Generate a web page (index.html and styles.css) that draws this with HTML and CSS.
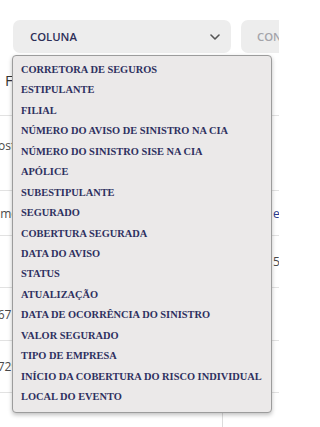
FILE: index.html
```html
<!DOCTYPE html>
<html lang="pt-BR">
<head>
<meta charset="utf-8">
<title>Filtros</title>
<link rel="stylesheet" href="styles.css">
</head>
<body>
<div class="page">
  <div class="filters">
    <div class="select sel-main">
      <span class="sel-label">COLUNA</span>
      <svg class="chev" width="10" height="6" viewBox="0 0 10 6"><path d="M1 1 L5 5 L9 1" fill="none" stroke="#555" stroke-width="1.6" stroke-linecap="round" stroke-linejoin="round"/></svg>
    </div>
    <div class="select sel-second">
      <span class="sel-label muted">CONDIÇÃO</span>
    </div>
  </div>
  <div class="head">
    <div class="title">Filtros</div>
  </div>
  <div class="table">
    <div class="row r1"><div class="cell"><span class="txt">Agosto</span></div><div class="cell"></div></div>
    <div class="row r2"><div class="cell"><span class="txt">Nome</span></div><div class="cell"><span class="rtxt link">e</span></div></div>
    <div class="row r3"><div class="cell"></div><div class="cell"><span class="rtxt">5(</span></div></div>
    <div class="row r4"><div class="cell"><span class="txt">12671</span></div><div class="cell"></div></div>
    <div class="row r5"><div class="cell"><span class="txt">30729</span></div><div class="cell"></div></div>
    <div class="row r6"><div class="cell divider"></div><div class="cell"></div></div>
  </div>
  <ul class="dropdown">
    <li>CORRETORA DE SEGUROS</li>
    <li>ESTIPULANTE</li>
    <li>FILIAL</li>
    <li>NÚMERO DO AVISO DE SINISTRO NA CIA</li>
    <li>NÚMERO DO SINISTRO SISE NA CIA</li>
    <li>APÓLICE</li>
    <li>SUBESTIPULANTE</li>
    <li>SEGURADO</li>
    <li>COBERTURA SEGURADA</li>
    <li>DATA DO AVISO</li>
    <li>STATUS</li>
    <li>ATUALIZAÇÃO</li>
    <li>DATA DE OCORRÊNCIA DO SINISTRO</li>
    <li>VALOR SEGURADO</li>
    <li>TIPO DE EMPRESA</li>
    <li>INÍCIO DA COBERTURA DO RISCO INDIVIDUAL</li>
    <li>LOCAL DO EVENTO</li>
  </ul>
</div>
</body>
</html>
```
FILE: styles.css
```css
html, body {
  margin: 0;
  padding: 0;
  background: #ffffff;
}
.page {
  position: relative;
  width: 279px;
  height: 427px;
  overflow: hidden;
  font-family: "Open Sans", "Liberation Sans", sans-serif;
}
.filters {
  display: flex;
  gap: 10px;
  height: 53px;
  box-sizing: border-box;
  padding: 20px 0 0 13px;
}
.select {
  flex-shrink: 0;
  height: 33px;
  background: #ededed;
  border-radius: 7px;
  display: flex;
  align-items: center;
  box-sizing: border-box;
}
.sel-main {
  width: 218px;
  padding: 0 11px 0 17px;
  justify-content: space-between;
}
.sel-second {
  width: 140px;
  padding: 0 0 0 16px;
}
.sel-label {
  font-size: 11.3px;
  font-weight: 600;
  color: #2d2f58;
}
.sel-label.muted {
  color: #a4a4aa;
}
.chev {
  display: block;
}
.head {
  height: 62px;
  box-sizing: border-box;
  padding: 17px 0 0 5px;
}
.title {
  font-size: 15px;
  line-height: 20px;
  font-weight: 500;
  color: #333333;
}
.row {
  display: grid;
  grid-template-columns: 223px 1fr;
  border-top: 1px solid #e2e2e2;
  box-sizing: border-box;
  font-size: 12px;
  color: #4a4a4a;
}
.r1 { height: 75px; }
.r2 { height: 45px; }
.r3 { height: 52px; }
.r4 { height: 53px; }
.r5 { height: 52px; }
.r6 { height: 40px; }
.cell {
  display: flex;
  align-items: center;
}
.r1 .cell { align-items: flex-start; padding-top: 21px; }
.txt {
  margin-left: -16px;
}
.rtxt {
  margin-left: 50px;
}
.link {
  color: #2b3a8c;
}
.divider {
  border-right: 1px solid #dcdcdc;
}
.dropdown {
  position: absolute;
  left: 12px;
  top: 55px;
  width: 260px;
  height: 358px;
  box-sizing: border-box;
  margin: 0;
  padding: 4px 0 0 8px;
  list-style: none;
  background: #ebe9e9;
  border: 1px solid #9c9c9c;
  border-radius: 4px;
  box-shadow: 0 2px 4px rgba(0, 0, 0, 0.25);
  font-family: "Liberation Serif", "Times New Roman", serif;
  font-weight: 700;
  font-size: 10.4px;
  line-height: 20.44px;
  color: #2e3060;
  white-space: nowrap;
}
```
